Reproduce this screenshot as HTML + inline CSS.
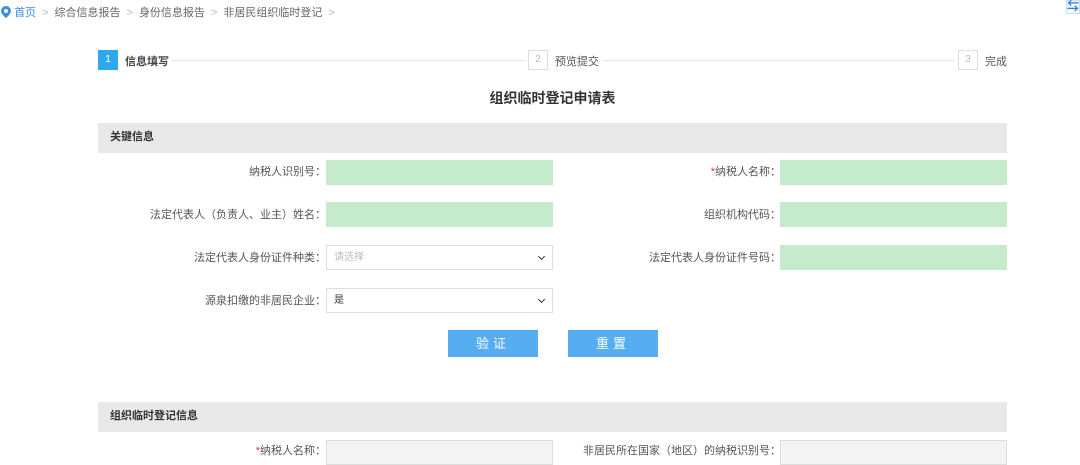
<!DOCTYPE html><html><head><meta charset="utf-8"><style>
*{margin:0;padding:0;box-sizing:border-box}
body{width:1080px;height:452px;overflow:hidden;background:#fff;font-family:"Liberation Sans","Noto Sans CJK SC",sans-serif;font-size:11px;color:#555;position:relative}
.a{position:absolute}
.bc{top:4px;left:0;font-size:11px;color:#666;white-space:nowrap}
.bc span{color:#bbb;margin:0 6px}
.step{width:20px;height:20px;border:1px solid #ddd;color:#bbb;text-align:center;line-height:18px;font-size:10px}
.line{height:1px;background:#e5e5e5;top:60px}
.sec{left:98px;width:909px;height:30px;background:#e8e8e8;font-weight:bold;color:#333;padding-left:12px;line-height:28px}
.lbl{text-align:right;width:240px;font-size:11px;color:#555}
.in{height:25px;width:227px;background:#c6ebcc}
.sel{height:25px;width:227px;border:1px solid #ddd;background:#fff;font-size:10px;padding-left:7px;line-height:23px}
.sel:after{content:"";position:absolute;right:8px;top:8px;width:4px;height:4px;border-right:1.5px solid #333;border-bottom:1.5px solid #333;transform:rotate(45deg)}
.btn{width:90px;height:27px;background:#56adf1;color:#fff;text-align:center;line-height:27px;font-size:13px;letter-spacing:4px}
</style></head><body>
<div class="a bc"><svg width="10" height="12" style="vertical-align:-2px;margin-left:1px" viewBox="0 0 10 12"><path d="M5 0a5 5 0 0 0-5 5c0 3 5 7 5 7s5-4 5-7a5 5 0 0 0-5-5z" fill="#3a8ee6"/><circle cx="5" cy="5" r="2" fill="#fff"/></svg> <b style="font-weight:normal;color:#3a8ee6">首页</b><span>&gt;</span>综合信息报告<span>&gt;</span>身份信息报告<span>&gt;</span>非居民组织临时登记<span>&gt;</span></div>
<div class="a" style="right:0;top:0;width:14px;height:14px;border:1px solid #cde;background:#f3f8ff;color:#2a7fd4;font-size:12px;line-height:11px;text-align:center;font-weight:bold">⇆</div>
<div class="a step" style="left:98px;top:50px;background:#2ea9ee;border-color:#2ea9ee;color:#fff">1</div>
<div class="a" style="left:125px;top:53px;font-weight:bold;color:#444">信息填写</div>
<div class="a line" style="left:172px;width:352px"></div>
<div class="a step" style="left:528px;top:50px">2</div>
<div class="a" style="left:555px;top:53px">预览提交</div>
<div class="a line" style="left:603px;width:352px"></div>
<div class="a step" style="left:958px;top:50px">3</div>
<div class="a" style="left:985px;top:53px">完成</div>
<div class="a" style="left:0;width:1080px;top:88px;text-align:center;font-size:14px;font-weight:bold;color:#333;padding-left:25px">组织临时登记申请表</div>
<div class="a sec" style="top:123px">关键信息</div>
<div class="a lbl" style="left:86px;top:163px">纳税人识别号：</div><div class="a in" style="left:326px;top:160px"></div>
<div class="a lbl" style="left:541px;top:163px"><span style="color:#e33">*</span>纳税人名称：</div><div class="a in" style="left:780px;top:160px"></div>
<div class="a lbl" style="left:86px;top:206px">法定代表人（负责人、业主）姓名：</div><div class="a in" style="left:326px;top:202px"></div>
<div class="a lbl" style="left:541px;top:206px">组织机构代码：</div><div class="a in" style="left:780px;top:202px"></div>
<div class="a lbl" style="left:86px;top:249px">法定代表人身份证件种类：</div><div class="a sel" style="left:326px;top:245px;color:#bbb">请选择</div>
<div class="a lbl" style="left:541px;top:249px">法定代表人身份证件号码：</div><div class="a in" style="left:780px;top:245px"></div>
<div class="a lbl" style="left:86px;top:292px">源泉扣缴的非居民企业：</div><div class="a sel" style="left:326px;top:288px;color:#333">是</div>
<div class="a btn" style="left:448px;top:330px">验证</div>
<div class="a btn" style="left:568px;top:330px">重置</div>
<div class="a sec" style="top:402px">组织临时登记信息</div>
<div class="a lbl" style="left:86px;top:442px"><span style="color:#e33">*</span>纳税人名称：</div><div class="a" style="left:326px;top:440px;width:227px;height:25px;border:1px solid #ddd;background:#f3f3f3"></div>
<div class="a lbl" style="left:441px;top:442px;width:340px">非居民所在国家（地区）的纳税识别号：</div><div class="a" style="left:780px;top:440px;width:227px;height:25px;border:1px solid #ddd;background:#f3f3f3"></div>
</body></html>
